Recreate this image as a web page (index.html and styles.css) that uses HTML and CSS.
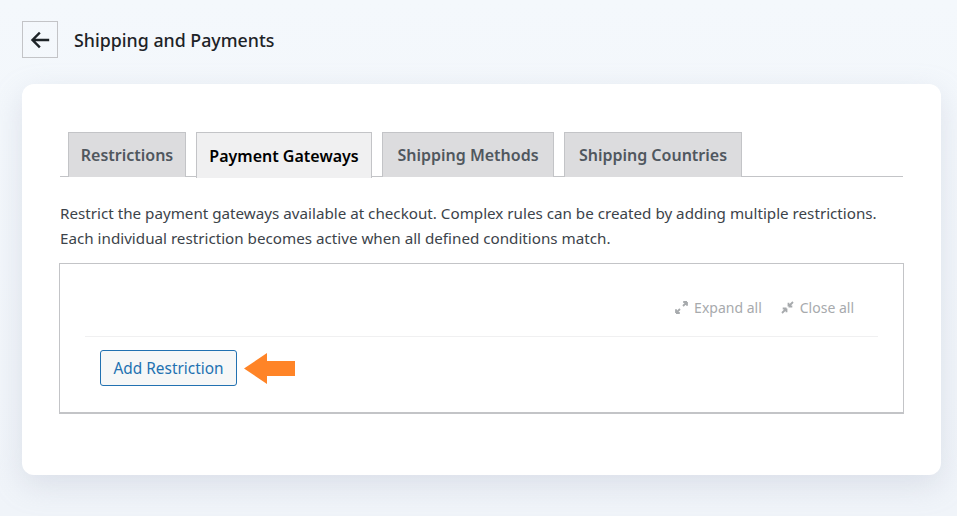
FILE: index.html
```html
<!DOCTYPE html>
<html>
<head>
<meta charset="utf-8">
<link rel="stylesheet" href="styles.css">
</head>
<body>
<div class="page">
  <header class="topbar">
    <button class="back" aria-label="Back">
      <svg width="22" height="22" viewBox="0 0 22 22"><path d="M19 11H4M10 4.5L3.5 11 10 17.5" fill="none" stroke="#1d2327" stroke-width="2.4" stroke-linecap="square"/></svg>
    </button>
    <h1 class="title">Shipping and Payments</h1>
  </header>
  <main class="card">
    <nav class="tabs">
      <a class="tab tab-restrictions">Restrictions</a>
      <a class="tab tab-gateways active">Payment Gateways</a>
      <a class="tab tab-methods">Shipping Methods</a>
      <a class="tab tab-countries">Shipping Countries</a>
    </nav>
    <p class="desc">Restrict the payment gateways available at checkout. Complex rules can be created by adding multiple restrictions.<br>Each individual restriction becomes active when all defined conditions match.</p>
    <section class="box">
      <div class="toolbar">
        <span class="tool">
          <svg width="13" height="13" viewBox="0 0 13 13"><path d="M1 12L5 8M1 12V8.2M1 12H4.8" fill="none" stroke="#a7aaad" stroke-width="1.8"/><path d="M12 1L8 5M12 1V4.8M12 1H8.2" fill="none" stroke="#a7aaad" stroke-width="1.8"/></svg>
          Expand all</span>
        <span class="tool">
          <svg width="13" height="13" viewBox="0 0 13 13"><path d="M1 12L5.5 7.5M5.5 7.5V11.3M5.5 7.5H1.7" fill="none" stroke="#a7aaad" stroke-width="1.8"/><path d="M12 1L7.5 5.5M7.5 5.5V1.7M7.5 5.5H11.3" fill="none" stroke="#a7aaad" stroke-width="1.8"/></svg>
          Close all</span>
      </div>
      <div class="actions">
        <button class="add">Add Restriction</button>
        <svg class="pointer" width="51" height="31" viewBox="0 0 51 31"><path d="M0 15.5L23 0V8H51V23H23V31Z" fill="#ff8427"/></svg>
      </div>
    </section>
  </main>
</div>
</body>
</html>
```

FILE: styles.css
```css
* { box-sizing: border-box; }
html, body { margin: 0; }
body {
  background: linear-gradient(180deg, #f4f8fc 0%, #f0f4f9 100%);
  font-family: "Noto Sans", "Open Sans", sans-serif;
  color: #1d2327;
  width: 957px;
  height: 516px;
  overflow: hidden;
}
.page { padding: 21px 16px 0 22px; }
.topbar {
  display: flex;
  align-items: center;
  gap: 16px;
  height: 37px;
}
.back {
  width: 36px;
  height: 37px;
  border: 1px solid #c3c4c7;
  background: transparent;
  display: flex;
  align-items: center;
  justify-content: center;
  padding: 0;
}
.title {
  margin: 0;
  font-size: 17.8px;
  font-weight: 500;
  color: #1d2327;
  letter-spacing: 0;
}
.card {
  margin-top: 26px;
  width: 919px;
  height: 391px;
  background: #fff;
  border-radius: 12px;
  box-shadow: 0 10px 30px rgba(160, 170, 190, 0.28);
  padding: 48px 38px 0 38px;
}
.tabs {
  display: flex;
  gap: 10px;
  padding-left: 8px;
  border-bottom: 1px solid #c3c4c7;
  height: 45px;
}
.tab {
  height: 45px;
  padding: 0;
  background: #dcdcde;
  border: 1px solid #c3c4c7;
  border-bottom: none;
  font-size: 16px;
  font-weight: 600;
  color: #50575e;
  display: flex;
  align-items: center;
  justify-content: center;
  white-space: nowrap;
}
.tab-restrictions { width: 118px; }
.tab-gateways { width: 176px; }
.tab-methods { width: 172px; }
.tab-countries { width: 178px; }
.tab.active {
  background: #f0f0f1;
  color: #000;
  height: 46px;
  margin-bottom: -1px;
}
.desc {
  margin: 24px 0 0 0;
  font-size: 15.2px;
  line-height: 25px;
  color: #3c434a;
  white-space: nowrap;
}
.box {
  margin-top: 12px;
  margin-left: -1px;
  width: 845px;
  height: 151px;
  border: 1px solid #c3c4c7;
  border-bottom-width: 2px;
  padding: 0 25px 0 25px;
}
.toolbar {
  display: flex;
  justify-content: flex-end;
  align-items: center;
  gap: 19px;
  height: 73px;
  padding: 14px 24px 0 0;
  border-bottom: 1px solid #f0f0f1;
  font-size: 14px;
  color: #a7aaad;
}
.tool { display: flex; align-items: center; gap: 6px; }
.actions {
  display: flex;
  align-items: center;
  gap: 7px;
  padding: 13px 0 0 15px;
}
.add {
  height: 36px;
  width: 137px;
  border: 1px solid #2271b1;
  border-radius: 3px;
  background: #f6f7f7;
  color: #2271b1;
  font-family: "Noto Sans", "Open Sans", sans-serif;
  font-size: 15.4px;
  padding: 0;
}
.pointer { display: block; }
```
